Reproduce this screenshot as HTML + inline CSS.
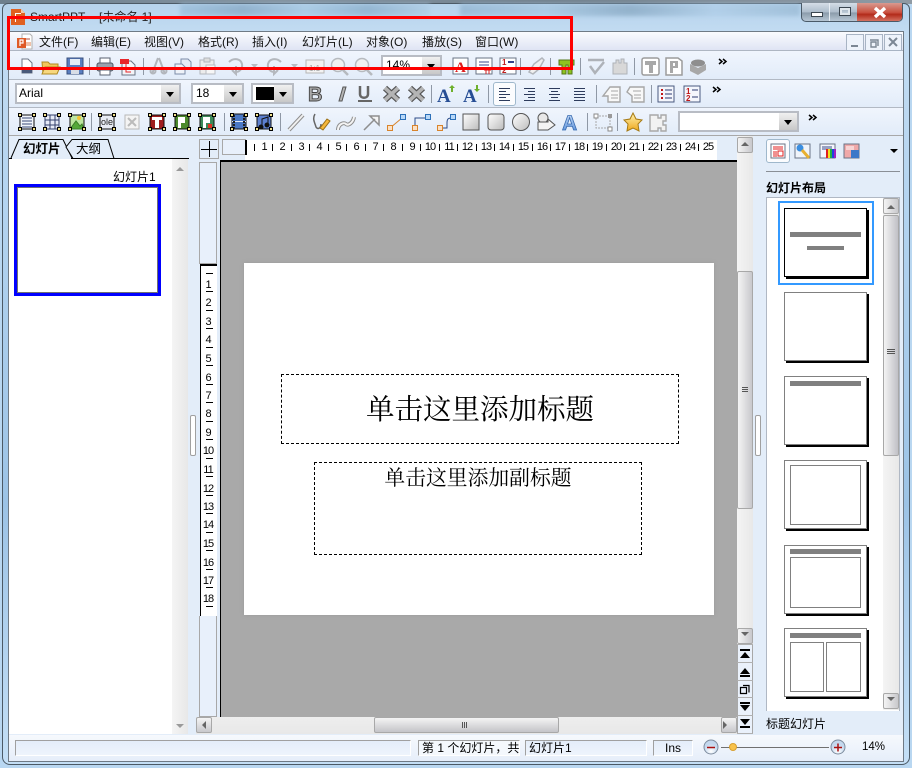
<!DOCTYPE html>
<html><head><meta charset="utf-8"><style>
html,body{margin:0;padding:0;width:912px;height:768px;overflow:hidden;background:#b9d7f1}
body{position:relative;font:12px "Liberation Sans","WenQuanYi Zen Hei","Noto Sans CJK SC",sans-serif;color:#000}
div,span{position:absolute;box-sizing:border-box;white-space:nowrap}
.m{top:34px;line-height:16px;font-size:12px;color:#111}
.row{left:9px;width:894px;background:linear-gradient(#f0f5fd,#e2ecf9);border-bottom:1px solid #b2b9c4}
.combo{background:#fff;border:2px solid #b8bcc4;}
.combo i{position:absolute;right:0;top:0;bottom:0;width:18px;background:linear-gradient(#f0f0f0,#c8c8c8)}
.combo i:after{content:"";position:absolute;left:5px;top:7px;border:4px solid transparent;border-top:5px solid #000}
.sb{background:linear-gradient(90deg,#f4f4f4,#e8e8e8)}
.btn{background:linear-gradient(90deg,#f4f4f4,#c8c8cc);border:1px solid #a8a8a8;border-radius:2px}
.th{left:784px;width:83px;background:#fff;border:1px solid #808080;box-shadow:2px 2px 0 #000}
.bar{position:absolute;background:#808080}
.box{position:absolute;border:1px solid #808080}
.st{top:740px;height:16px;background:linear-gradient(#e4edfa,#eef4fc);border:1px solid #a0a0a0;border-right-color:#fff;border-bottom-color:#fff;font-size:12px;line-height:14px;padding-left:3px}
.h{top:141px;width:20px;text-align:center;font-size:11px;letter-spacing:-1px;line-height:12px}
.v{left:200px;width:16px;text-align:center;font-size:11px;letter-spacing:-1px;line-height:12px}
</style></head><body>

<!-- glass frame -->
<div style="left:0;top:0;width:912px;height:4px;background:linear-gradient(90deg,#6d7f8d,#8494a1 30%,#72818e 60%,#8f9aa4);"></div>
<div style="left:2px;top:3px;width:908px;height:762px;border:1px solid #4c5a66;border-radius:6px 6px 8px 8px;background:linear-gradient(180deg,#b6d3ec 0,#c3dcf2 30px,#b4d4f0 200px,#9cc3e6 500px,#c4dff6 100%)"></div>
<div style="left:180px;top:4px;width:250px;height:12px;background:linear-gradient(90deg,#9dc0dc,#88aac6,#a8cae4,#8cb0cc,#b0cee6);filter:blur(2px);opacity:.8"></div>
<div style="left:460px;top:4px;width:340px;height:12px;background:linear-gradient(90deg,#94b6d2,#a8c8e2,#8aaac4,#b0cee8,#9cbcd6);filter:blur(2px);opacity:.8"></div>

<!-- title -->
<svg style="position:absolute;left:10px;top:8px" width="17" height="18"><path d="M1 1h10l4 4v12H1z" fill="#e0601f"/><path d="M11 1l4 4h-4z" fill="#f6c8a8"/><path d="M5 14V5h6v1H6v3h4v1H6v4z" fill="#fff"/></svg>
<div style="left:30px;top:9px;font-size:12px;line-height:16px;color:#222">SmartPPT</div>
<div style="left:99px;top:9px;font-size:12px;line-height:16px;color:#222">[未命名 1]</div>

<!-- window buttons -->
<div style="left:801px;top:3px;width:102px;height:19px;border:1px solid #4a5a68;border-top:0;border-radius:0 0 5px 5px;overflow:hidden;background:linear-gradient(#d4dde6,#aebdcb 50%,#8b9cab 55%,#b6c6d4)">
<div style="left:27px;top:0;width:1px;height:19px;background:#e8eef4"></div>
<div style="left:55px;top:0;width:46px;height:19px;background:linear-gradient(#d89a90,#c9503f 50%,#b22a1a 60%,#d87c6c)"></div>
<div style="left:9px;top:9px;width:12px;height:5px;border:1px solid #3b4650;background:#fff"></div>
<div style="left:37px;top:4px;width:12px;height:9px;border:1px solid #3b4650;background:linear-gradient(#9fb0c0,#cdd8e2);box-shadow:inset 0 0 0 2px #dfe6ec"></div>
<svg style="position:absolute;left:70px;top:3px" width="16" height="13"><path d="M3 2l10 9M13 2L3 11" stroke="#fff" stroke-width="3.4"/></svg>
</div>

<!-- client -->
<div style="left:8px;top:31px;width:896px;height:731px;background:#e3edf9;border:1px solid #6f7a85"></div>
<div style="left:9px;top:32px;width:894px;height:19px;background:linear-gradient(#fafbfe,#dfe4f4);border-bottom:1px solid #aeb6c2"></div>
<div class="row" style="top:51px;height:29px"></div>
<div class="row" style="top:80px;height:28px"></div>
<div class="row" style="top:108px;height:28px;border-bottom:1px solid #a8a8a8"></div>

<!-- menu -->
<svg style="position:absolute;left:16px;top:33px" width="17" height="17"><path d="M6 1h8l2 2v13H6z" fill="#fff" stroke="#b0b0b0"/><rect x="8" y="5" width="6" height="2" fill="#d8a8a0"/><rect x="10" y="9" width="5" height="4" fill="#f0c0a8"/><rect x="1" y="5" width="9" height="10" fill="#df5a26"/><path d="M4 13V7h3v3H4" fill="none" stroke="#fff" stroke-width="1.2"/></svg>
<span class="m" style="left:39px">文件(F)</span>
<span class="m" style="left:91px">编辑(E)</span>
<span class="m" style="left:144px">视图(V)</span>
<span class="m" style="left:198px">格式(R)</span>
<span class="m" style="left:252px">插入(I)</span>
<span class="m" style="left:302px">幻灯片(L)</span>
<span class="m" style="left:366px">对象(O)</span>
<span class="m" style="left:422px">播放(S)</span>
<span class="m" style="left:475px">窗口(W)</span>
<svg style="position:absolute;left:846px;top:34px" width="57" height="18"><g fill="#eef3fb" stroke="#a8b4c4"><rect x=".5" y=".5" width="17" height="16"/><rect x="19.5" y=".5" width="17" height="16"/><rect x="38.5" y=".5" width="17" height="16"/></g><path d="M5 11h7v2H5z" fill="#7c8794"/><path d="M24 6h8v6M25 8h5v5h-5z" fill="none" stroke="#7c8794" stroke-width="1.4"/><path d="M43 4l8 8M51 4l-8 8" stroke="#7c8794" stroke-width="2"/></svg>

<!-- row 1 combo -->
<div class="combo" style="left:381px;top:55px;width:61px;height:21px;font-size:12px;line-height:17px;padding-left:3px">14%<i></i></div>
<!-- row 2 combos -->
<div class="combo" style="left:15px;top:83px;width:166px;height:21px;font-size:12px;line-height:17px;padding-left:2px">Arial<i style="width:18px"></i></div>
<div class="combo" style="left:191px;top:83px;width:53px;height:21px;font-size:12px;line-height:17px;padding-left:3px">18<i></i></div>
<div class="combo" style="left:251px;top:83px;width:43px;height:21px;"><i></i><span style="left:3px;top:2px;width:18px;height:13px;background:#000"></span></div>
<div style="left:493px;top:82px;width:23px;height:24px;background:#fbfcfe;border:1px solid #9fb8cc;border-radius:3px"></div>
<!-- row 3 combo -->
<div class="combo" style="left:678px;top:111px;width:121px;height:21px"><i></i></div>

<!-- toolbar icons -->
<svg style="position:absolute;left:0;top:0" width="912" height="140" font-family="Liberation Sans">
<g fill="#8f98a5"><rect x="89" y="58" width="1" height="17"/><rect x="143" y="58" width="1" height="17"/><rect x="520" y="58" width="1" height="17"/><rect x="550" y="58" width="1" height="17"/><rect x="580" y="58" width="1" height="17"/><rect x="634" y="58" width="1" height="17"/>
<rect x="431" y="85" width="1" height="18"/><rect x="488" y="85" width="1" height="18"/><rect x="596" y="85" width="1" height="18"/><rect x="651" y="85" width="1" height="18"/>
<rect x="91" y="113" width="1" height="18"/><rect x="224" y="113" width="1" height="18"/><rect x="280" y="113" width="1" height="18"/><rect x="587" y="113" width="1" height="18"/><rect x="617" y="113" width="1" height="18"/></g>

<!-- row1 -->
<path d="M22 59h6l4 4v10H22z" fill="#fff" stroke="#6c7686"/><rect x="22" y="70" width="10" height="3" fill="#4a5a7a"/>
<path d="M42 62h6l2 2h8v3H46l-3 7z" fill="#f2c75c" stroke="#b08a22"/><path d="M45 67h15l-3 7H42z" fill="#f7d87e" stroke="#b08a22"/>
<rect x="67" y="58" width="16" height="16" fill="#5a7ec0" stroke="#39507e"/><rect x="70" y="59" width="10" height="6" fill="#e4ecf6"/><rect x="71" y="68" width="8" height="6" fill="#d8dde6"/>
<rect x="97" y="63" width="16" height="8" rx="2" fill="#9aa2ae" stroke="#4e5662"/><rect x="100" y="58" width="10" height="5" fill="#fff" stroke="#5a6270"/><rect x="100" y="70" width="10" height="5" fill="#fff" stroke="#5a6270"/>
<path d="M122 61h9l4 4v10h-13z" fill="#f4f4f8" stroke="#6a7484"/><rect x="120" y="59" width="9" height="5" fill="#e8262a"/><path d="M126 64v8h5" stroke="#e8262a" fill="none"/>
<g fill="none" stroke="#b2b6bc" stroke-width="2"><path d="M152 74l6-16M165 74l-6-16"/><circle cx="153" cy="71" r="2.5"/><circle cx="164" cy="71" r="2.5"/></g>
<path d="M181 59h7l3 3v7h-10z" fill="#e6ecf6" stroke="#7c8ca8"/><path d="M175 64h7l3 3v7h-10z" fill="#eef2f8" stroke="#7c8ca8"/>
<rect x="200" y="60" width="14" height="14" fill="#ececec" stroke="#b2b6bc"/><rect x="204" y="58" width="6" height="4" fill="#ddd" stroke="#b2b6bc"/><rect x="206" y="65" width="9" height="9" fill="#f6f6f6" stroke="#b8bcc2"/>
<g fill="none" stroke="#b4b8be" stroke-width="2"><path d="M229 62c5-5 12-3 13 2s-3 8-6 8"/><path d="M236 66v8l-4-4"/><path d="M281 62c-5-5-12-3-13 2s3 8 6 8"/><path d="M274 66v8l4-4"/></g>
<path d="M251 64h7l-3.500 4zM291 64h7l-3.500 4z" fill="#b8bcc2"/>
<rect x="306" y="60" width="18" height="13" fill="#f2f2f2" stroke="#b6b6b6"/><text x="309" y="71" font-size="8" fill="#a6a6a6">1:1</text>
<g fill="#f0f0f0" stroke="#b6babf" stroke-width="1.500"><circle cx="338" cy="65" r="6.500"/><circle cx="362" cy="65" r="6.500"/></g><path d="M343 70l5 5M367 70l5 5" stroke="#b6babf" stroke-width="2.500"/>
<rect x="453" y="58" width="15" height="16" fill="#fff" stroke="#6a7486"/><text x="455" y="72" font-size="15" font-weight="bold" font-family="Liberation Serif" fill="#dd1c1c">A</text>
<rect x="476" y="58" width="16" height="16" fill="#fff" stroke="#6a7486"/><path d="M479 62h10M479 65h10M479 68h6" stroke="#3c4a8c"/><path d="M484 70h7M486 70v4M489 70v4" stroke="#d42020"/>
<rect x="500" y="58" width="16" height="16" fill="#fff" stroke="#6a7486"/><text x="502" y="65" font-size="8" font-weight="bold" fill="#c01c1c">1</text><text x="502" y="73" font-size="8" font-weight="bold" fill="#c01c1c">2</text><path d="M508 62h6M508 69h6" stroke="#30408a" stroke-width="2"/>
<path d="M529 72l5-8 8-6 2 2-5 9-6 5z" fill="#f0f0f0" stroke="#b2b6bc" stroke-width="1.500"/>
<path d="M559 60h15v5h-2v9h-4v-9h-2v9h-4v-9h-3z" fill="#8fc31f" stroke="#55771a"/>
<path d="M588 60h16M590 66l5 7 9-11" fill="none" stroke="#aeb2b8" stroke-width="2.500"/>
<path d="M613 74V63h3v-3h3v3h2v-4h3v4h3v11z" fill="#d8d8d8" stroke="#aeb2b8"/>
<rect x="642" y="58" width="17" height="17" rx="2" fill="#fff" stroke="#9c9c9c" stroke-width="1.500"/><path d="M645 61h11v4h-3v8h-4v-8h-4z" fill="#a8a8a8"/>
<path d="M666 58h12l4 3v14h-16z" fill="#fff" stroke="#9c9c9c" stroke-width="1.500"/><path d="M670 61h8v7h-5v5h-3z" fill="#a8a8a8"/><rect x="673" y="63" width="2" height="3" fill="#fff"/>
<ellipse cx="698" cy="63" rx="7" ry="3.500" fill="#8e8e8e"/><path d="M690 64l8 4 8-4v6l-8 5-8-4z" fill="#a8a8a8"/>
<path d="M719 59l3 2.500-3 2.500M723 59l3 2.500-3 2.500" fill="none" stroke="#000" stroke-width="1.500"/>

<!-- row2 -->
<text x="308" y="101" font-size="20" font-weight="bold" fill="#a8a8a8" stroke="#444" stroke-width=".9">B</text>
<path d="M385 88l13 12M398 88l-13 12M410 88l13 12M423 88l-13 12" stroke="#555" stroke-width="6"/>
<path d="M385 88l13 12M398 88l-13 12M410 88l13 12M423 88l-13 12" stroke="#b4b4b4" stroke-width="3.600"/>
<path d="M343 87h3l-4 14h-3z" fill="#b4b4b4" stroke="#555"/>
<path d="M360 86v8c0 5 8 5 8 0v-8" fill="none" stroke="#666" stroke-width="2.500"/><rect x="358" y="100" width="14" height="2" fill="#666"/>
<text x="437" y="102" font-size="19" font-weight="bold" font-family="Liberation Serif" fill="#264d94">A</text><path d="M451 92v-4h-2l3-3 3 3h-2v4z" fill="#6eb02c"/>
<text x="463" y="102" font-size="19" font-weight="bold" font-family="Liberation Serif" fill="#264d94">A</text><path d="M476 85v4h-2l3 3 3-3h-2v-4z" fill="#6eb02c"/>
<g stroke="#2d3b5c" stroke-width="1"><path d="M499 88.500h11M499 91.500h7M499 94.500h11M499 97.500h7M499 100.500h11"/>
<path d="M524 88.500h11M528 91.500h7M524 94.500h11M528 97.500h7M524 100.500h11"/>
<path d="M549 88.500h11M551 91.500h7M549 94.500h11M551 97.500h7M549 100.500h11"/>
<path d="M574 88.500h11M574 91.500h11M574 94.500h11M574 97.500h11M574 100.500h11"/></g>
<g fill="#f8f8f8" stroke="#a6a6a6" stroke-width="1.400"><path d="M610 87h10v15h-12v-6h-5z"/><path d="M630 87h14v15h-12v-6l-5-4z"/></g>
<path d="M611 91h7M611 95h7M611 98h7M633 91h8M634 95h7M634 98h7" stroke="#a6a6a6"/>
<rect x="658" y="86" width="16" height="16" fill="#f4f6fc" stroke="#4a5a80"/><path d="M661 90h2M661 94h2M661 98h2" stroke="#c01818" stroke-width="2"/><path d="M665 90h7M665 94h7M665 98h7" stroke="#2c3a70"/>
<rect x="684" y="86" width="16" height="16" fill="#f4f6fc" stroke="#4a5a80"/><text x="686" y="94" font-size="8" font-weight="bold" fill="#c01818">1</text><text x="686" y="101" font-size="8" font-weight="bold" fill="#c01818">2</text><path d="M692 90h6M692 97h6" stroke="#2c3a70"/>
<path d="M713 87l3 2.500-3 2.500M717 87l3 2.500-3 2.500" fill="none" stroke="#000" stroke-width="1.500"/>

<!-- row3 -->
<g fill="none" stroke="#111">
<rect x="20" y="115" width="14" height="14" fill="#f0f4fa"/><path d="M22 118h10M22 121h10M22 124h10M22 127h10" stroke="#3a4a78"/>
<rect x="45" y="115" width="14" height="14" fill="#e6eaf6" stroke="#33406c"/><path d="M45 120h14M45 125h14M50 115v14M55 115v14" stroke="#33406c"/>
<rect x="70" y="115" width="14" height="14" fill="#bde6a0"/><path d="M70 129l6-8 4 5 2-2 2 5z" fill="#55a83a" stroke="#3c8028"/><circle cx="79" cy="118" r="2" fill="#f4c232" stroke="none"/>
<rect x="100" y="115" width="14" height="14" fill="#e8ecf4"/><text x="101" y="125" font-size="9" fill="#222" stroke="none">ole</text>
<rect x="125" y="115" width="14" height="14" stroke="#b8b8b8" fill="#f4f4f4"/><path d="M128 118l8 8M136 118l-8 8" stroke="#bbb" stroke-width="2"/>
<rect x="150" y="115" width="14" height="14" fill="#a01c1c"/><path d="M152 117h10v3h-3v8h-4v-8h-3z" fill="#fff" stroke="none"/>
<rect x="175" y="115" width="14" height="14" fill="#4c8a2c"/><path d="M178 117h7v6h-4v5h-3z" fill="#fff" stroke="none"/>
<rect x="200" y="115" width="14" height="14" fill="#3c8a58"/><path d="M203 117h7v6h-4v5h-3z" fill="#fff" stroke="none"/><rect x="208" y="124" width="4" height="4" fill="#e03020" stroke="none"/>
<rect x="232" y="114" width="14" height="15" fill="#4a78c4"/><path d="M232 121.500h14" stroke="#dfe8f6"/><path d="M234 115v14M244 115v14" stroke="#222" stroke-width="2" stroke-dasharray="2 1"/>
<rect x="257" y="115" width="14" height="14" fill="#5c80d0"/><path d="M262 127v-8l6-2v8" stroke="#111"/><circle cx="261" cy="127" r="2" fill="#111"/><circle cx="267" cy="125" r="2" fill="#111"/>
</g>
<g fill="#f4e48c" stroke="#000"><path d="M18.500 113.500h3v3h-3zM32.500 113.500h3v3h-3zM18.500 127.500h3v3h-3zM32.500 127.500h3v3h-3zM43.500 113.500h3v3h-3zM57.500 113.500h3v3h-3zM43.500 127.500h3v3h-3zM57.500 127.500h3v3h-3zM68.500 113.500h3v3h-3zM82.500 113.500h3v3h-3zM68.500 127.500h3v3h-3zM82.500 127.500h3v3h-3zM98.500 113.500h3v3h-3zM112.500 113.500h3v3h-3zM98.500 127.500h3v3h-3zM112.500 127.500h3v3h-3zM148.500 113.500h3v3h-3zM162.500 113.500h3v3h-3zM148.500 127.500h3v3h-3zM162.500 127.500h3v3h-3zM173.500 113.500h3v3h-3zM187.500 113.500h3v3h-3zM173.500 127.500h3v3h-3zM187.500 127.500h3v3h-3zM198.500 113.500h3v3h-3zM212.500 113.500h3v3h-3zM198.500 127.500h3v3h-3zM212.500 127.500h3v3h-3zM230.500 113.500h3v3h-3zM244.500 113.500h3v3h-3zM230.500 127.500h3v3h-3zM244.500 127.500h3v3h-3zM255.500 113.500h3v3h-3zM269.500 113.500h3v3h-3zM255.500 127.500h3v3h-3zM269.500 127.500h3v3h-3z"/></g>
<path d="M289 130l14-15" stroke="#8e8e8e" stroke-width="4"/><path d="M289 130l14-15" stroke="#f0f0f0" stroke-width="2"/>
<path d="M315 114c-3 5 0 9 1 13 2 3 5 1 5-3" fill="none" stroke="#666" stroke-width="1.500"/><path d="M320 128l7-9 3 2-7 9z" fill="#f4b73c" stroke="#9a6e14"/>
<path d="M338 130c0-6 6-8 8-6s7-1 8-7" fill="none" stroke="#8e8e8e" stroke-width="4"/><path d="M338 130c0-6 6-8 8-6s7-1 8-7" fill="none" stroke="#f4f4f4" stroke-width="2"/>
<path d="M364 130l11-11M370 116h9v9z" fill="#f4f4f4" stroke="#8e8e8e" stroke-width="1.500"/>
<g stroke-width="1"><path d="M390 128l12-10" stroke="#d8842c"/><path d="M415 128v-10h12" fill="none" stroke="#2c4c88"/><path d="M441 128h6v-5c0-4 1-5 5-5" fill="none" stroke="#2c4c88"/>
<rect x="387.500" y="125.500" width="5" height="5" fill="#fbe0c4" stroke="#d8842c"/><rect x="400.500" y="114.500" width="5" height="5" fill="#b8d8f8" stroke="#2c70b8"/>
<rect x="412.500" y="125.500" width="5" height="5" fill="#fbe0c4" stroke="#d8842c"/><rect x="425.500" y="114.500" width="5" height="5" fill="#b8d8f8" stroke="#2c70b8"/>
<rect x="437.500" y="125.500" width="5" height="5" fill="#fbe0c4" stroke="#d8842c"/><rect x="450.500" y="114.500" width="5" height="5" fill="#b8d8f8" stroke="#2c70b8"/></g>
<defs><linearGradient id="g" x2="1" y2="1"><stop stop-color="#fff"/><stop offset="1" stop-color="#bcbcbc"/></linearGradient><linearGradient id="y" x2="0" y2="1"><stop stop-color="#fff2b0"/><stop offset="1" stop-color="#efa81c"/></linearGradient><linearGradient id="bA" x2="0" y2="1"><stop stop-color="#cde0f8"/><stop offset="1" stop-color="#4a86d8"/></linearGradient></defs>
<rect x="463" y="114" width="16" height="16" fill="url(#g)" stroke="#555"/>
<rect x="488" y="114" width="16" height="16" rx="3" fill="url(#g)" stroke="#555"/>
<circle cx="521" cy="122" r="8.500" fill="url(#g)" stroke="#555"/>
<circle cx="543" cy="118" r="5" fill="#e8e8e8" stroke="#555"/><path d="M538 122h10v-3l7 6-7 5h-10z" fill="#f4f4f4" stroke="#555"/>
<text x="562" y="130" font-size="21" font-weight="bold" fill="url(#bA)" stroke="#3a6cb0" stroke-width=".8">A</text>
<rect x="596" y="116" width="14" height="12" fill="none" stroke="#a8a8a8" stroke-dasharray="2 1"/><rect x="594" y="114" width="4" height="4" fill="#fff" stroke="#8a8a8a"/><rect x="608" y="114" width="4" height="4" fill="#9a9a9a"/><rect x="608" y="127" width="4" height="4" fill="#fff" stroke="#8a8a8a"/>
<path d="M633 113l3 6 6 1-4 4 1 7-6-3-6 3 1-7-4-4 6-1z" fill="url(#y)" stroke="#a67a14"/>
<path d="M650 115h8v3h3v-3h5v6h-3v4h3v6h-5v-3h-3v3h-8z" fill="#f2f2f2" stroke="#a8a8a8" stroke-width="1.400"/>
<path d="M809 115l3 2.500-3 2.500M813 115l3 2.500-3 2.500" fill="none" stroke="#000" stroke-width="1.500"/>
</svg>

<!-- left panel -->
<div style="left:9px;top:137px;width:180px;height:23px;background:#e3edf9"></div>
<svg style="position:absolute;left:9px;top:137px" width="180" height="23"><path d="M0 21.500h180" stroke="#000"/><path d="M2 21L10 2.500h44L63 21" fill="#e3edf9" stroke="#000"/><path d="M57 10l6-7.500h36L105 21.500H64z" fill="#e3edf9" stroke="#000"/><path d="M3 21.500h59" stroke="#e3edf9" stroke-width="1.400"/></svg>
<div style="left:23px;top:142px;font-size:12.500px;font-weight:bold;line-height:15px">幻灯片</div>
<div style="left:76px;top:142px;font-size:12.500px;line-height:15px">大纲</div>
<div style="left:9px;top:159px;width:163px;height:575px;background:#fff"></div>
<div style="left:113px;top:169px;font-size:12px;line-height:16px">幻灯片1</div>
<div style="left:14px;top:184px;width:147px;height:112px;border:3px solid #0000ff;background:#fff"></div>
<div style="left:17px;top:187px;width:141px;height:106px;border:1px solid #707070"></div>
<div class="sb" style="left:172px;top:159px;width:16px;height:575px"></div>
<svg style="position:absolute;left:172px;top:162px" width="16" height="572"><path d="M4 9l4-4 4 4z" fill="#9a9a9a"/><path d="M4 562l4 4 4-4z" fill="#9a9a9a"/></svg>
<div style="left:190px;top:415px;width:6px;height:41px;background:#fff;border:1px solid #a0a0a0;border-radius:2px"></div>

<!-- rulers -->
<div style="left:199px;top:139px;width:20px;height:20px;border:1px solid #a8a8a8"></div>
<div style="left:201px;top:149px;width:16px;height:1px;background:#000"></div>
<div style="left:209px;top:141px;width:1px;height:16px;background:#000"></div>
<div style="left:222px;top:139px;width:24px;height:16px;border:1px solid #a8a8a8;border-right:0;background:#e8f0fb"></div>
<div style="left:245px;top:140px;width:472px;height:20px;background:#fff"></div>
<div style="left:245px;top:140px;width:2px;height:15px;background:#000"></div>
<div style="left:220px;top:160px;width:517px;height:2px;background:#000"></div>
<div class="h" style="left:254px">1</div><div class="h" style="left:272px">2</div><div class="h" style="left:291px">3</div><div class="h" style="left:309px">4</div><div class="h" style="left:328px">5</div><div class="h" style="left:346px">6</div><div class="h" style="left:365px">7</div><div class="h" style="left:383px">8</div><div class="h" style="left:402px">9</div><div class="h" style="left:420px">10</div><div class="h" style="left:439px">11</div><div class="h" style="left:457px">12</div><div class="h" style="left:476px">13</div><div class="h" style="left:494px">14</div><div class="h" style="left:513px">15</div><div class="h" style="left:532px">16</div><div class="h" style="left:550px">17</div><div class="h" style="left:569px">18</div><div class="h" style="left:587px">19</div><div class="h" style="left:606px">20</div><div class="h" style="left:624px">21</div><div class="h" style="left:643px">22</div><div class="h" style="left:661px">23</div><div class="h" style="left:680px">24</div><div class="h" style="left:698px">25</div>
<svg style="position:absolute;left:246px;top:143px" width="471" height="10"><path d="M8.500 1v7M26.500 1v7M45.500 1v7M63.500 1v7M82.500 1v7M100.500 1v7M119.500 1v7M137.500 1v7M156.500 1v7M174.500 1v7M193.500 1v7M211.500 1v7M230.500 1v7M248.500 1v7M267.500 1v7M286.500 1v7M304.500 1v7M323.500 1v7M341.500 1v7M360.500 1v7M378.500 1v7M397.500 1v7M415.500 1v7M434.500 1v7M452.500 1v7" stroke="#000"/></svg>

<div style="left:199px;top:162px;width:18px;height:102px;background:#e8f0fb;border:1px solid #a8a8a8"></div>
<div style="left:200px;top:264px;width:17px;height:352px;background:#fff;border-top:2px solid #000;border-left:1px solid #000"></div>
<div style="left:199px;top:616px;width:18px;height:101px;background:#e8f0fb;border:1px solid #a8a8a8;border-top:0"></div>
<div style="left:220px;top:162px;width:1px;height:555px;background:#000"></div>
<div class="v" style="top:279px">1</div><div class="v" style="top:297px">2</div><div class="v" style="top:316px">3</div><div class="v" style="top:334px">4</div><div class="v" style="top:353px">5</div><div class="v" style="top:372px">6</div><div class="v" style="top:390px">7</div><div class="v" style="top:408px">8</div><div class="v" style="top:427px">9</div><div class="v" style="top:445px">10</div><div class="v" style="top:464px">11</div><div class="v" style="top:483px">12</div><div class="v" style="top:501px">13</div><div class="v" style="top:519px">14</div><div class="v" style="top:538px">15</div><div class="v" style="top:557px">16</div><div class="v" style="top:575px">17</div><div class="v" style="top:593px">18</div>
<svg style="position:absolute;left:205px;top:273px" width="10" height="340"><path d="M1 .5h7M1 18.500h7M1 37.500h7M1 55.500h7M1 74.500h7M1 92.500h7M1 111.500h7M1 129.500h7M1 148.500h7M1 166.500h7M1 185.500h7M1 203.500h7M1 222.500h7M1 240.500h7M1 259.500h7M1 277.500h7M1 296.500h7M1 314.500h7M1 333.500h7" stroke="#000"/></svg>

<!-- canvas -->
<div style="left:221px;top:162px;width:516px;height:555px;background:#a9a9a9"></div>
<div style="left:244px;top:263px;width:470px;height:352px;background:#fff;box-shadow:0 0 4px #999"></div>
<div style="left:281px;top:374px;width:398px;height:70px;border:1px dashed #000"></div>
<div style="left:281px;top:388px;width:398px;text-align:center;font:400 28.500px/40px 'Noto Serif CJK SC','Liberation Serif',serif">单击这里添加标题</div>
<div style="left:314px;top:462px;width:328px;height:93px;border:1px dashed #000"></div>
<div style="left:314px;top:461px;width:328px;text-align:center;font:400 20.800px/30px 'Noto Serif CJK SC','Liberation Serif',serif">单击这里添加副标题</div>

<!-- v scrollbar -->
<div class="sb" style="left:737px;top:136px;width:16px;height:508px"></div>
<div class="btn" style="left:737px;top:137px;width:16px;height:16px"></div>
<div class="btn" style="left:737px;top:271px;width:16px;height:238px"></div>
<div class="btn" style="left:737px;top:628px;width:16px;height:16px"></div>
<svg style="position:absolute;left:737px;top:137px" width="16" height="600"><path d="M4 9l4-4 4 4zM4 495l4 4 4-4z" fill="#666"/><path d="M5 250.500h6M5 252.500h6M5 254.500h6" stroke="#555"/></svg>

<!-- nav buttons -->
<div style="left:737px;top:644px;width:16px;height:90px;background:#eaf1fb;border-left:1px solid #a8a8a8;border-right:1px solid #a8a8a8"></div>
<svg style="position:absolute;left:737px;top:644px" width="16" height="90"><path d="M0 .5h16M0 18.500h16M0 36.500h16M0 53.500h16M0 71.500h16M0 89.500h16" stroke="#b0b0b0"/>
<rect x="3" y="5" width="10" height="2"/><path d="M3 14l5-6 5 6z"/>
<path d="M3 30l5-6 5 6z"/><rect x="3" y="31" width="10" height="2"/>
<path d="M6 41.500h6v7M3.500 43.500h6v6h-6z" fill="none" stroke="#000" stroke-width="1.200"/>
<rect x="3" y="58" width="10" height="2"/><path d="M3 61l5 6 5-6z"/>
<path d="M3 75l5 6 5-6z"/><rect x="3" y="82" width="10" height="2"/></svg>

<!-- h scrollbar -->
<div class="sb" style="left:196px;top:717px;width:541px;height:17px;background:linear-gradient(#eee,#e8e8e8)"></div>
<div class="btn" style="left:196px;top:717px;width:16px;height:16px;background:linear-gradient(#f4f4f4,#c8c8cc)"></div>
<div class="btn" style="left:721px;top:717px;width:16px;height:16px;background:linear-gradient(#f4f4f4,#c8c8cc)"></div>
<div class="btn" style="left:374px;top:717px;width:185px;height:16px;background:linear-gradient(#f4f4f4,#c4c4c8)"></div>
<svg style="position:absolute;left:196px;top:717px" width="541" height="16"><path d="M10 4l-4 4 4 4zM527 4l4 4-4 4z" fill="#666"/><path d="M266.500 5v6M268.500 5v6M270.500 5v6" stroke="#555"/></svg>

<!-- right panel -->
<div style="left:766px;top:139px;width:24px;height:24px;background:#fbfcfe;border:1px solid #9fb8cc;border-radius:3px"></div>
<svg style="position:absolute;left:766px;top:139px" width="140" height="36">
<rect x="5" y="5" width="14" height="14" fill="#fff" stroke="#6a7486"/><path d="M7 8h10M7 10h10M7 13h4M7 15h4M7 17h4" stroke="#e02020"/><rect x="12" y="12" width="5" height="5" fill="none" stroke="#e02020"/>
<rect x="29" y="5" width="15" height="14" fill="#f0f4fa" stroke="#6a7486"/><circle cx="34" cy="9" r="3.500" fill="#3a8ee0"/><path d="M36 11l7 8" stroke="#e8b030" stroke-width="3"/>
<rect x="54" y="5" width="15" height="14" fill="#f4f6fc" stroke="#6a7486"/><path d="M56 8h10M56 10h10" stroke="#3a4a88"/>
<rect x="60" y="10" width="2" height="9" fill="#e02020"/><rect x="62" y="10" width="2" height="9" fill="#f0e020"/><rect x="64" y="10" width="2" height="9" fill="#20b040"/><rect x="66" y="10" width="2" height="9" fill="#2040e0"/><rect x="68" y="10" width="2" height="9" fill="#a020c0"/>
<rect x="78" y="5" width="15" height="14" fill="#f0a8a8" stroke="#6a7486"/><rect x="85" y="11" width="8" height="8" fill="#3c78c8"/><path d="M80 8h8M80 10h8" stroke="#fff"/>
<path d="M124 10h8l-4 4z" fill="#000"/>
<path d="M0 32.500h134" stroke="#8a8f96"/></svg>
<div style="left:766px;top:180px;font-size:12px;font-weight:bold;line-height:16px">幻灯片布局</div>

<div style="left:766px;top:197px;width:134px;height:514px;background:#fff;border:1px solid #b0b8c4;border-bottom:0"></div>
<div class="sb" style="left:883px;top:198px;width:16px;height:512px"></div>
<div class="btn" style="left:883px;top:198px;width:16px;height:16px"></div>
<div class="btn" style="left:883px;top:215px;width:16px;height:241px;background:linear-gradient(90deg,#f4f4f4,#c0c0c6)"></div>
<div class="btn" style="left:883px;top:693px;width:16px;height:16px"></div>
<svg style="position:absolute;left:883px;top:198px" width="16" height="512"><path d="M4 11l4-4 4 4zM4 499l4 4 4-4z" fill="#666"/><path d="M4 151.500h8M4 153.500h8M4 155.500h8" stroke="#555"/></svg>

<div style="left:778px;top:201px;width:96px;height:84px;border:2px solid #3399ff"></div>
<div class="th" style="top:208px;height:69px;border-color:#000"><span class="bar" style="left:5px;top:23px;width:71px;height:5px"></span><span class="bar" style="left:22px;top:37px;width:37px;height:4px"></span></div>
<div class="th" style="top:292px;height:69px"></div>
<div class="th" style="top:376px;height:69px"><span class="bar" style="left:5px;top:4px;width:71px;height:5px"></span></div>
<div class="th" style="top:460px;height:69px"><span class="box" style="left:5px;top:4px;width:71px;height:60px"></span></div>
<div class="th" style="top:545px;height:69px"><span class="bar" style="left:5px;top:3px;width:71px;height:5px"></span><span class="box" style="left:5px;top:11px;width:71px;height:51px"></span></div>
<div class="th" style="top:628px;height:69px"><span class="bar" style="left:5px;top:4px;width:71px;height:5px"></span><span class="box" style="left:5px;top:13px;width:34px;height:50px"></span><span class="box" style="left:41px;top:13px;width:35px;height:50px"></span></div>
<div style="left:766px;top:716px;font-size:12px;line-height:16px">标题幻灯片</div>
<div style="left:755px;top:415px;width:6px;height:41px;background:#fff;border:1px solid #a0a0a0;border-radius:2px"></div>

<!-- status bar -->
<div style="left:9px;top:735px;width:894px;height:26px;background:linear-gradient(#f6f9fd,#e6eefa)"></div>
<div class="st" style="left:15px;width:396px"></div>
<div class="st" style="left:418px;width:102px;background:#f4f8fd">第 1 个幻灯片，共</div>
<div class="st" style="left:525px;width:122px">幻灯片1</div>
<div class="st" style="left:653px;width:40px;text-align:center;padding:0">Ins</div>
<svg style="position:absolute;left:700px;top:736px" width="150" height="22"><defs><radialGradient id="r" cx=".5" cy=".8"><stop stop-color="#fff"/><stop offset="1" stop-color="#c4d8ee"/></radialGradient></defs>
<circle cx="11" cy="11" r="7" fill="url(#r)" stroke="#7d8c9e"/><path d="M7 11.500h8" stroke="#a81010" stroke-width="1.500"/>
<path d="M21 11.500h108" stroke="#707070"/>
<circle cx="33" cy="11" r="3.500" fill="#f8c24c" stroke="#d8a030"/>
<circle cx="138" cy="11" r="7" fill="url(#r)" stroke="#7d8c9e"/><path d="M134 11.500h8M138 7.500v8" stroke="#a81010" stroke-width="1.500"/></svg>
<div style="left:862px;top:740px;font-size:11.500px;line-height:15px">14%</div>

<!-- red annotation -->
<div style="left:7px;top:16px;width:566px;height:54px;border:3px solid #fe0000;"></div>
</body></html>
